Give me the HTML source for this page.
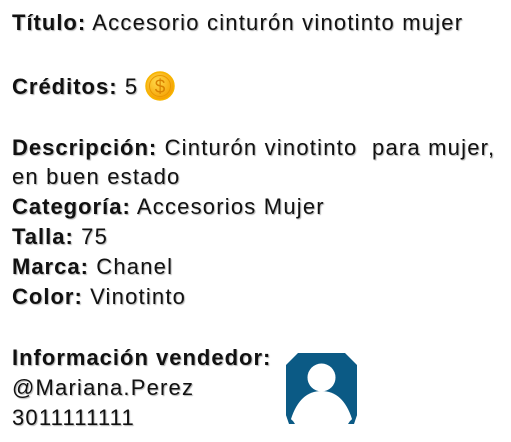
<!DOCTYPE html>
<html><head><meta charset="utf-8"><style>
html,body{margin:0;padding:0;background:#fff;width:511px;height:442px;overflow:hidden}
.l{position:absolute;left:12px;height:30px;line-height:30px;font-family:"Liberation Sans",sans-serif;font-size:22px;letter-spacing:1.2px;color:#111;white-space:pre;text-shadow:1px 1px 1px rgba(0,0,0,0.3)}
b{font-weight:bold;letter-spacing:1px}
</style></head><body>
<div class="l" style="top:8px"><b>Título:</b> Accesorio cinturón vinotinto mujer</div>
<div class="l" style="top:72px"><b>Créditos:</b> 5</div>
<svg style="position:absolute;left:144px;top:70px" width="32" height="32" viewBox="0 0 32 32">
<defs><radialGradient id="g" cx="40%" cy="35%" r="65%"><stop offset="0" stop-color="#ffd84a"/><stop offset="1" stop-color="#f5a000"/></radialGradient></defs>
<circle cx="16" cy="16" r="14" fill="url(#g)" stroke="#f7b500" stroke-width="1.5"/>
<circle cx="16" cy="16" r="10.5" fill="none" stroke="#e89800" stroke-width="1"/>
<text x="16" y="23" text-anchor="middle" font-family="Liberation Sans" font-size="19" fill="#d98200">$</text>
</svg>
<div class="l" style="top:133px"><b>Descripción:</b> Cinturón vinotinto  para mujer,</div>
<div class="l" style="top:162px">en buen estado</div>
<div class="l" style="top:192px"><b>Categoría:</b> Accesorios Mujer</div>
<div class="l" style="top:222px"><b>Talla:</b> 75</div>
<div class="l" style="top:252px"><b>Marca:</b> Chanel</div>
<div class="l" style="top:282px"><b>Color:</b> Vinotinto</div>
<div class="l" style="top:343px"><b>Información vendedor:</b></div>
<div class="l" style="top:373px">@Mariana.Perez</div>
<div class="l" style="top:403px">3011111111</div>
<svg style="position:absolute;left:286px;top:353px" width="71" height="73" viewBox="0 0 71 73">
<path d="M12 0H59L71 12V62L68 70H3L0 62V12Z" fill="#0b5a85"/>
<path d="M5 66Q14 38 35.5 38Q57 38 66 66L64 71H7Z" fill="#fff"/>
<path d="M0 62L7 68L9 71H3Z" fill="#0b5a85"/>
<path d="M71 62L64 68L62 71H68Z" fill="#0b5a85"/>
<circle cx="35.5" cy="24.5" r="14" fill="#fff"/>
</svg>
</body></html>
